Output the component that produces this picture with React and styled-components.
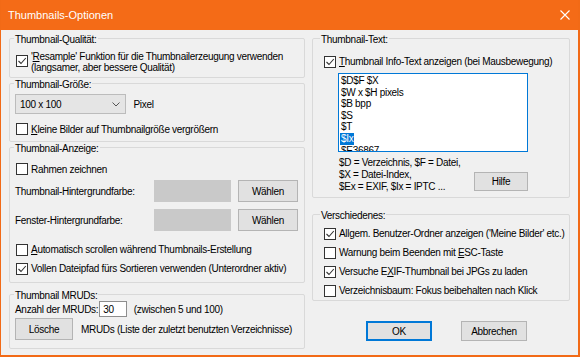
import React from 'react';
import styled, { createGlobalStyle } from 'styled-components';

const GlobalStyle = createGlobalStyle`
    html, body {
        margin: 0;
        padding: 0;
        background: #ffffff;
    }
    body {
        font-family: "Liberation Sans", Arial, sans-serif;
        font-size: 10px;
        letter-spacing: -0.3px;
        color: #000;
    }
`;

const Window = styled.div`
    width: 580px;
    height: 357px;
    box-sizing: border-box;
    border-style: solid;
    border-color: #f26a16;
    border-width: 0 2px 2px 1px;
    background: #f0f0f0;
    display: flex;
    flex-direction: column;
    overflow: hidden;
`;

const TitleBar = styled.div`
    height: 30px;
    flex: none;
    background: #f46b17;
    color: #fff;
    display: flex;
    align-items: center;
    justify-content: space-between;
    padding: 0 8px 0 7px;
`;

const Title = styled.span`
    font-size: 11px;
    letter-spacing: 0;
    padding-bottom: 1px;
`;

const Body = styled.div`
    display: grid;
    grid-template-columns: 296px 258px;
    column-gap: 7px;
    padding-left: 8px;
    align-items: start;
`;

const Column = styled.div`
    display: flex;
    flex-direction: column;
`;

const Group = styled.fieldset`
    box-sizing: border-box;
    margin: ${p => p.$mt || 0}px 0 0 0;
    height: ${p => p.$h}px;
    padding: 0 4px 0 ${p => p.$pl}px;
    border: 1px solid #d9d9d9;
    border-radius: 2px;
    min-width: 0;
    display: flex;
    flex-direction: column;
`;

const Caption = styled.legend`
    padding: 3px 1px 0 1px;
    margin-left: ${p => p.$ml || -1}px;
    line-height: 13px;
`;

const Row = styled.div`
    display: flex;
    align-items: ${p => (p.$start ? 'flex-start' : 'center')};
    gap: ${p => p.$gap ?? 3}px;
    height: ${p => p.$h}px;
    margin-top: ${p => p.$mt || 0}px;
    flex: none;
`;

const Label = styled.span`
    white-space: nowrap;
    line-height: ${p => p.$lh || 13}px;
    width: ${p => (p.$w ? `${p.$w}px` : 'auto')};
    flex: none;
`;

const Key = styled.u`
    text-underline-offset: 1px;
`;

const Box = styled.span`
    box-sizing: border-box;
    width: 12px;
    height: 12px;
    flex: none;
    margin-left: 1px;
    margin-top: ${p => p.$mt || 0}px;
    background: #fff;
    border: 1px solid #333;
    display: flex;
    align-items: center;
    justify-content: center;
`;

const Check = ({ checked, mt }) => (
    <Box $mt={mt}>
        {checked && (
            <svg width="10" height="10" viewBox="0 0 10 10">
                <polyline points="1.5,5 4,7.5 8.8,2" fill="none" stroke="#333" strokeWidth="1.1" />
            </svg>
        )}
    </Box>
);

const Combo = styled.div`
    box-sizing: border-box;
    width: 111px;
    height: 20px;
    margin-right: 5px;
    padding: 0 5px 0 4px;
    background: #e5e5e5;
    border: 1px solid #bcbcbc;
    display: flex;
    align-items: center;
    justify-content: space-between;
`;

const Swatch = styled.div`
    width: 77px;
    height: 22px;
    background: #c9c9c9;
    flex: none;
`;

const Button = styled.div`
    box-sizing: border-box;
    width: ${p => p.$w}px;
    height: ${p => p.$h || 22}px;
    margin-left: ${p => p.$ml || 0}px;
    margin-top: ${p => p.$mt || 0}px;
    background: #e1e1e1;
    border: 1px solid ${p => (p.$primary ? '#0078d7' : '#b4b4b4')};
    box-shadow: ${p => (p.$primary ? 'inset 0 0 0 1px #0078d7' : 'none')};
    display: flex;
    align-items: center;
    justify-content: center;
    flex: none;
`;

const NumberInput = styled.div`
    box-sizing: border-box;
    width: 28px;
    height: 16px;
    margin: 0 4px 0 1px;
    padding-left: 3px;
    background: #fff;
    border: 1px solid #8e8e8e;
    display: flex;
    align-items: center;
`;

const ListBox = styled.div`
    box-sizing: border-box;
    width: 190px;
    height: 79px;
    margin: 2px 0 0 15px;
    padding: 1px 1px;
    background: #fff;
    border: 1px solid #0078d7;
    overflow: hidden;
    flex: none;
`;

const Item = styled.div`
    line-height: 11.6px;
    height: 11.6px;
    white-space: nowrap;
    & > span {
        padding: 0 1px;
        display: inline-block;
        background: ${p => (p.$selected ? '#0078d7' : 'transparent')};
        color: ${p => (p.$selected ? '#fff' : '#000')};
    }
`;

const HelpRow = styled.div`
    display: flex;
    justify-content: space-between;
    align-items: flex-start;
    margin: 5px 0 0 16px;
    width: 189px;
`;

const Legend = styled.div`
    line-height: 12px;
    white-space: nowrap;
`;

const Footer = styled.div`
    display: flex;
    gap: 29px;
    padding-left: 54px;
    margin-top: 20px;
`;

const items = ['$D$F $X', '$W x $H pixels', '$B bpp', '$S', '$T', '$Ix', '$E36867'];

export default function App() {
    return (
        <>
            <GlobalStyle />
            <Window>
                <TitleBar>
                    <Title>Thumbnails-Optionen</Title>
                    <svg width="10" height="10" viewBox="0 0 10 10">
                        <path d="M0.5 0.5 L9.5 9.5 M9.5 0.5 L0.5 9.5" stroke="#fff" strokeWidth="1.1" />
                    </svg>
                </TitleBar>
                <Body>
                    <Column>
                        <Group $h={48} $pl={5}>
                            <Caption>Thumbnail-Qualität:</Caption>
                            <Row $start $mt={5} $h={24}>
                                <Check checked mt={4} />
                                <Label $lh={11}>
                                    '<Key>R</Key>esample' Funktion für die Thumbnailerzeugung verwenden
                                    <br />
                                    (langsamer, aber bessere Qualität)
                                </Label>
                            </Row>
                        </Group>
                        <Group $h={67} $mt={-3} $pl={5}>
                            <Caption>Thumbnail-Größe:</Caption>
                            <Row $mt={3} $h={20} $gap={0}>
                                <Combo>
                                    <span>100 x 100</span>
                                    <svg width="8" height="5" viewBox="0 0 8 5">
                                        <polyline points="0.5,0.5 4,4 7.5,0.5" fill="none" stroke="#555" strokeWidth="1" />
                                    </svg>
                                </Combo>
                                <Label>&nbsp;Pixel</Label>
                            </Row>
                            <Row $mt={5} $h={20}>
                                <Check />
                                <Label><Key>K</Key>leine Bilder auf Thumbnailgröße vergrößern</Label>
                            </Row>
                        </Group>
                        <Group $h={144} $mt={-3} $pl={5}>
                            <Caption>Thumbnail-Anzeige:</Caption>
                            <Row $mt={5} $h={18}>
                                <Check />
                                <Label>Rahmen zeichnen</Label>
                            </Row>
                            <Row $mt={2} $h={22} $gap={0}>
                                <Label $w={139}>Thumbnail-Hintergrundfarbe:</Label>
                                <Swatch />
                                <Button $w={60} $ml={7}>Wählen</Button>
                            </Row>
                            <Row $mt={7} $h={22} $gap={0}>
                                <Label $w={139}>Fenster-Hintergrundfarbe:</Label>
                                <Swatch />
                                <Button $w={60} $ml={7}>Wählen</Button>
                            </Row>
                            <Row $mt={9} $h={19}>
                                <Check />
                                <Label><Key>A</Key>utomatisch scrollen während Thumbnails-Erstellung</Label>
                            </Row>
                            <Row $h={19}>
                                <Check checked />
                                <Label>Vollen Dateipfad fürs Sortieren verwenden (Unterordner aktiv)</Label>
                            </Row>
                        </Group>
                        <Group $h={63} $mt={3} $pl={5}>
                            <Caption>Thumbnail MRUDs:</Caption>
                            <Row $mt={-1} $h={16} $gap={0}>
                                <Label>Anzahl der MRUDs:</Label>
                                <NumberInput>30</NumberInput>
                                <Label>&nbsp;(zwischen 5 und 100)</Label>
                            </Row>
                            <Row $mt={1} $h={22} $gap={8}>
                                <Button $w={58} $h={22}>Lösche</Button>
                                <Label>MRUDs (Liste der zuletzt benutzten Verzeichnisse)</Label>
                            </Row>
                        </Group>
                    </Column>
                    <Column>
                        <Group $h={168} $pl={10}>
                            <Caption $ml={-3}>Thumbnail-Text:</Caption>
                            <Row $mt={6} $h={19}>
                                <Check checked />
                                <Label><Key>T</Key>humbnail Info-Text anzeigen (bei Mausbewegung)</Label>
                            </Row>
                            <ListBox>
                                {items.map(text => (
                                    <Item key={text} $selected={text === '$Ix'}>
                                        <span>{text}</span>
                                    </Item>
                                ))}
                            </ListBox>
                            <HelpRow>
                                <Legend>
                                    $D = Verzeichnis, $F = Datei,
                                    <br />
                                    $X = Datei-Index,
                                    <br />
                                    $Ex = EXIF, $Ix = IPTC ...
                                </Legend>
                                <Button $w={54} $h={19} $mt={15}>Hilfe</Button>
                            </HelpRow>
                        </Group>
                        <Group $h={95} $mt={8} $pl={10}>
                            <Caption $ml={-3}>Verschiedenes:</Caption>
                            <Row $mt={2} $h={19}>
                                <Check checked />
                                <Label>Allgem. Benutzer-Ordner anzeigen ('Meine Bilder' etc.)</Label>
                            </Row>
                            <Row $h={19}>
                                <Check />
                                <Label>Warnung beim Beenden mit <Key>E</Key>SC-Taste</Label>
                            </Row>
                            <Row $h={19}>
                                <Check checked />
                                <Label>Versuche E<Key>X</Key>IF-Thumbnail bei JPGs zu laden</Label>
                            </Row>
                            <Row $h={19}>
                                <Check />
                                <Label>Verzeichnisbaum: Fokus beibehalten nach Klick</Label>
                            </Row>
                        </Group>
                        <Footer>
                            <Button $w={66} $h={20} $primary>OK</Button>
                            <Button $w={66} $h={20}>Abbrechen</Button>
                        </Footer>
                    </Column>
                </Body>
            </Window>
        </>
    );
}
